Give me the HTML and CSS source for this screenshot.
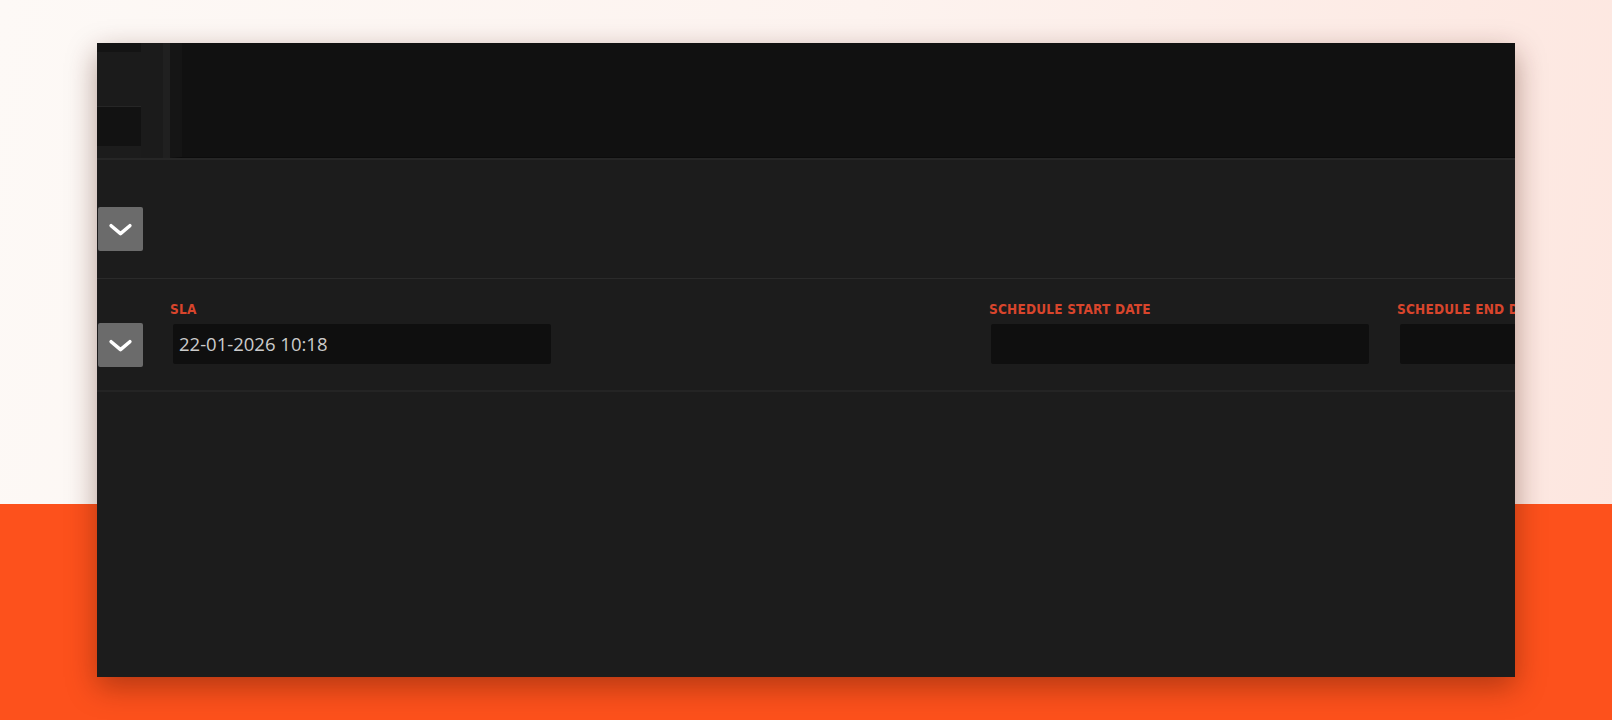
FILE: index.html
```html
<!DOCTYPE html>
<html>
<head>
<meta charset="utf-8">
<link rel="stylesheet" href="styles.css">
</head>
<body>
<div class="panel">
  <div class="row-top">
    <div class="side-top">
      <div class="st-strip"></div>
      <div class="st-mid"></div>
      <div class="st-box"></div>
    </div>
    <div class="gutter"></div>
    <div class="editor"></div>
  </div>
  <div class="row-one">
    <div class="side">
      <button class="chev"><svg viewBox="0 0 28 16" width="27" height="15"><path d="M4 4 L14 12.5 L24 4" fill="none" stroke="#fff" stroke-width="3.8" stroke-linecap="round" stroke-linejoin="round"/></svg></button>
    </div>
  </div>
  <div class="row-two">
    <div class="side">
      <button class="chev"><svg viewBox="0 0 28 16" width="27" height="15"><path d="M4 4 L14 12.5 L24 4" fill="none" stroke="#fff" stroke-width="3.8" stroke-linecap="round" stroke-linejoin="round"/></svg></button>
    </div>
    <div class="fields">
      <div class="field f-sla">
        <label class="lbl">SLA</label>
        <div class="inp">22-01-2026 10:18</div>
      </div>
      <div class="field f-start">
        <label class="lbl">SCHEDULE START DATE</label>
        <div class="inp"></div>
      </div>
      <div class="field f-end">
        <label class="lbl">SCHEDULE END DATE</label>
        <div class="inp"></div>
      </div>
    </div>
  </div>
  <div class="rest"></div>
</div>
</body>
</html>
```

FILE: styles.css
```css
html, body {
  margin: 0;
  padding: 0;
  height: 720px;
  overflow: hidden;
}
body {
  background:
    linear-gradient(to bottom, transparent 0, transparent 504px, #fd511c 504px),
    linear-gradient(100deg, #fdf9f6 0%, #fdf3ef 50%, #fde6df 100%);
  font-family: "Open Sans", "Liberation Sans", sans-serif;
  padding-top: 43px;
  padding-left: 97px;
  box-sizing: border-box;
}
.panel {
  width: 1418px;
  height: 634px;
  background: #1c1c1c;
  box-shadow: 0 10px 28px rgba(70, 20, 5, 0.4);
  display: flex;
  flex-direction: column;
  overflow: hidden;
}
.row-top {
  display: flex;
  height: 115px;
  flex: none;
}
.side-top {
  width: 44px;
  display: flex;
  flex-direction: column;
  flex: none;
}
.st-strip { height: 9px; background: #141414; }
.st-mid { height: 54px; background: #1b1b1b; border-bottom: 1px solid #262626; }
.st-box { height: 39px; background: #121212; }
.gutter {
  width: 29px;
  flex: none;
  background: linear-gradient(to right, #1b1b1b 0, #1b1b1b 22px, #202020 22px, #202020 29px);
}
.editor {
  flex: 1;
  background: #111111;
  border-left: 12px solid #151515;
  border-bottom: 1px solid #0c0c0c;
}
.row-one {
  height: 118px;
  flex: none;
  border-top: 2px solid #262626;
  border-bottom: 1px solid #2a2a2a;
  display: flex;
  align-items: flex-start;
}
.side {
  width: 46px;
  flex: none;
  padding-left: 1px;
}
.row-one .chev { margin-top: 47px; }
.chev {
  width: 45px;
  height: 44px;
  padding: 0;
  border: none;
  border-radius: 2px;
  background: #6b6b6b;
  display: flex;
  align-items: center;
  justify-content: center;
}
.chev svg { display: block; margin-top: 1px; }
.row-two {
  height: 111px;
  flex: none;
  border-bottom: 2px solid #242424;
  display: flex;
  align-items: flex-start;
}
.row-two .side { padding-top: 44px; }
.fields {
  display: flex;
  padding-top: 24px;
}
.field {
  display: flex;
  flex-direction: column;
}
.lbl {
  font-family: "DejaVu Sans Condensed", "DejaVu Sans", sans-serif;
  font-weight: bold;
  font-size: 13.5px;
  line-height: 13px;
  color: #d8452c;
  letter-spacing: 0.2px;
  white-space: nowrap;
  margin-bottom: 8px;
}
.inp {
  height: 40px;
  background: #0f0f0f;
  border-radius: 2px;
  color: #cbcbcb;
  font-size: 18.5px;
  line-height: 40px;
  padding-left: 6px;
  box-sizing: border-box;
  white-space: nowrap;
}
.f-sla { margin-left: 29px; }
.f-sla .lbl { margin-left: -3px; }
.f-sla .inp { width: 378px; }
.f-start { margin-left: 440px; }
.f-start .lbl { margin-left: -2px; }
.f-start .inp { width: 378px; }
.f-end { margin-left: 31px; }
.f-end .lbl { margin-left: -3px; }
.f-end .inp { width: 240px; }
.rest { flex: 1; }
```
